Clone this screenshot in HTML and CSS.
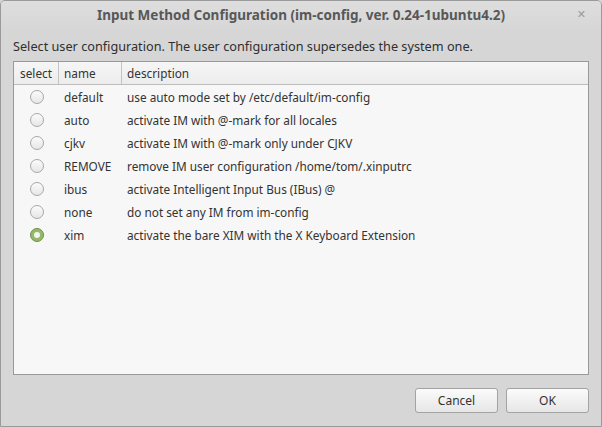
FILE: index.html
```html
<!DOCTYPE html>
<html>
<head>
<meta charset="utf-8">
<link rel="stylesheet" href="styles.css">
</head>
<body>
<div class="window">
  <div class="titlebar">
    <span class="title">Input Method Configuration (im-config, ver. 0.24-1ubuntu4.2)</span>
    <span class="close">✕</span>
  </div>
  <div class="content">
    <div class="prompt">Select user configuration. The user configuration supersedes the system one.</div>
    <div class="tree">
      <div class="row head">
        <div class="c1">select</div>
        <div class="c2">name</div>
        <div class="c3">description</div>
      </div>
      <div class="row"><div class="c1"><span class="radio"></span></div><div class="c2">default</div><div class="c3">use auto mode set by /etc/default/im-config</div></div>
      <div class="row"><div class="c1"><span class="radio"></span></div><div class="c2">auto</div><div class="c3">activate IM with @-mark for all locales</div></div>
      <div class="row"><div class="c1"><span class="radio"></span></div><div class="c2">cjkv</div><div class="c3">activate IM with @-mark only under CJKV</div></div>
      <div class="row"><div class="c1"><span class="radio"></span></div><div class="c2">REMOVE</div><div class="c3">remove IM user configuration /home/tom/.xinputrc</div></div>
      <div class="row"><div class="c1"><span class="radio"></span></div><div class="c2">ibus</div><div class="c3">activate Intelligent Input Bus (IBus) @</div></div>
      <div class="row"><div class="c1"><span class="radio"></span></div><div class="c2">none</div><div class="c3">do not set any IM from im-config</div></div>
      <div class="row"><div class="c1"><span class="radio on"></span></div><div class="c2">xim</div><div class="c3">activate the bare XIM with the X Keyboard Extension</div></div>
    </div>
    <div class="buttons">
      <button class="btn">Cancel</button>
      <button class="btn">OK</button>
    </div>
  </div>
</div>
</body>
</html>
```
FILE: styles.css
```css
html, body {
  margin: 0;
  padding: 0;
  background: #d6d6d6;
}
body {
  font-family: "Noto Sans", "DejaVu Sans", sans-serif;
  font-size: 11.8px;
  color: #333;
}
.window {
  width: 602px;
  height: 427px;
  box-sizing: border-box;
  border: 1px solid #9a9a9a;
  border-radius: 5px 5px 0 0;
  background: #d6d6d6;
  display: flex;
  flex-direction: column;
  overflow: hidden;
}
.titlebar {
  height: 30px;
  box-sizing: border-box;
  padding-bottom: 3px;
  flex: none;
  display: flex;
  align-items: center;
  justify-content: center;
  position: relative;
  background: linear-gradient(#dedede, #d6d6d6);
}
.title {
  font-weight: bold;
  font-size: 13.5px;
  color: #585858;
}
.close {
  position: absolute;
  right: 15px;
  top: 5px;
  font-size: 11px;
  font-weight: bold;
  color: #9a9a9a;
}
.content {
  flex: 1;
  display: flex;
  flex-direction: column;
  padding: 5px 12px 13px 12px;
}
.prompt {
  height: 25px;
  line-height: 20px;
  font-size: 12.7px;
  color: #2f2f2f;
}
.tree {
  height: 314px;
  box-sizing: border-box;
  border: 1px solid #999;
  background: #f7f7f7;
  display: flex;
  flex-direction: column;
}
.row {
  display: flex;
  height: 23px;
  align-items: center;
  color: #333;
}
.row.head {
  height: 22px;
  background: linear-gradient(#f6f6f6, #ececec);
  border-bottom: 1px solid #bdbdbd;
}
.c1 { width: 45px; display: flex; justify-content: center; box-sizing: border-box; }
.c2 { width: 63px; padding-left: 5px; box-sizing: border-box; }
.c3 { flex: 1; padding-left: 5px; }
.row.head .c1, .row.head .c2 {
  border-right: 1px solid #c4c4c4;
  height: 22px;
  line-height: 22px;
}
.radio {
  width: 14px;
  height: 14px;
  border-radius: 50%;
  border: 1px solid #a8a8a8;
  background: linear-gradient(#fbfbfb, #e6e6e6);
  box-sizing: border-box;
  display: inline-block;
  position: relative;
}
.radio.on {
  border-color: #6f8f4a;
  background: #94ba68;
}
.radio.on::after {
  content: "";
  position: absolute;
  left: 3px;
  top: 3px;
  width: 6px;
  height: 6px;
  border-radius: 50%;
  background: #f4f4f4;
}
.buttons {
  margin-top: auto;
  display: flex;
  justify-content: flex-end;
  gap: 8px;
}
.btn {
  width: 83px;
  height: 25px;
  font-family: "Noto Sans", "DejaVu Sans", sans-serif;
  font-size: 12px;
  color: #333;
  border: 1px solid #a3a3a3;
  border-radius: 3px;
  background: linear-gradient(#fbfbfb, #e6e6e6);
  padding: 0;
}
```
